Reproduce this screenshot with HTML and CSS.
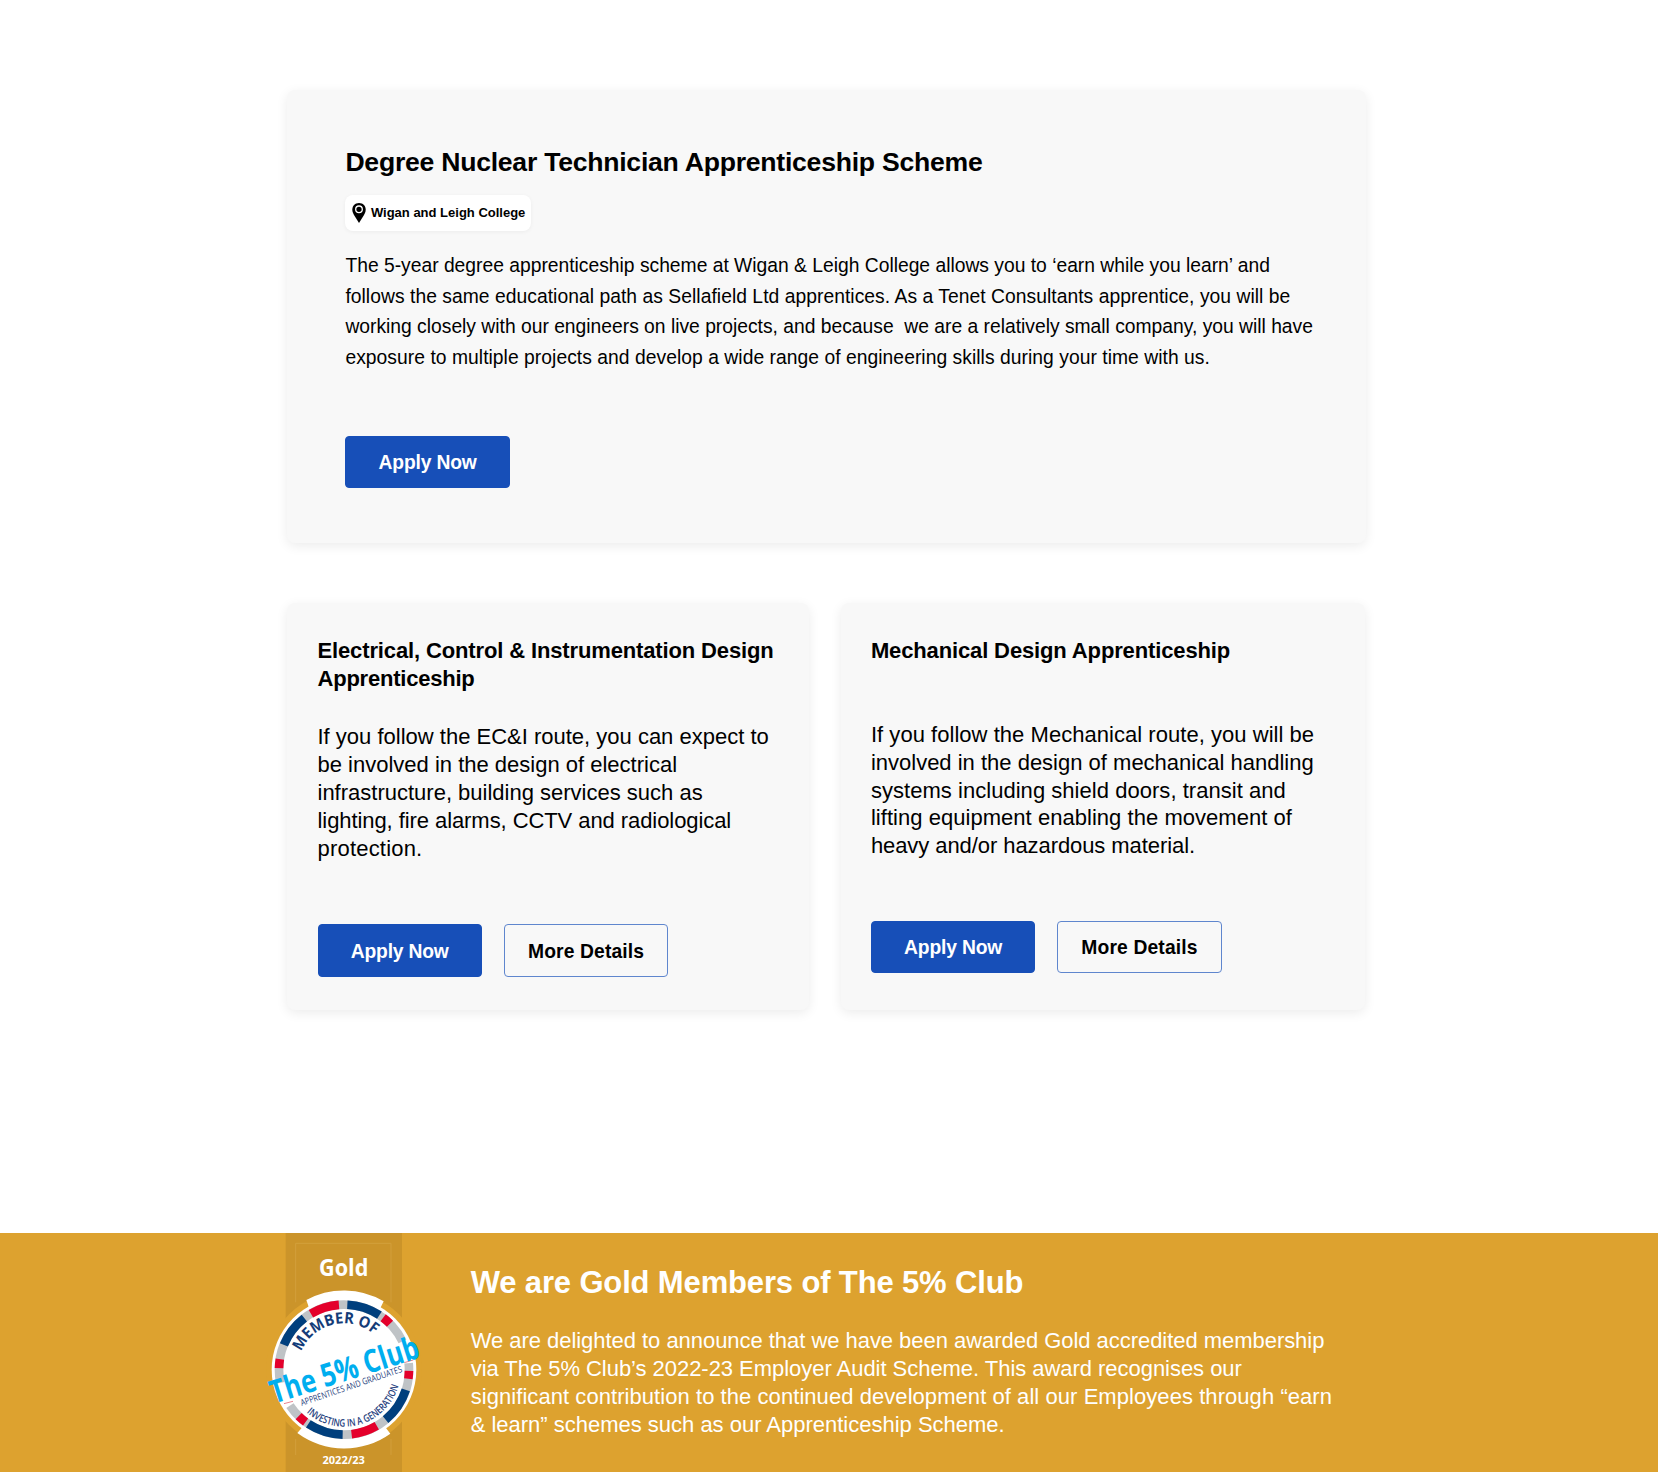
FILE: index.html
```html
<!DOCTYPE html>
<html lang="en">
<head>
<meta charset="utf-8">
<title>Apprenticeships</title>
<link rel="stylesheet" href="styles.css">
</head>
<body>
<main class="schemes">
  <section class="card card-wide">
    <h2 class="title-lg">Degree Nuclear Technician Apprenticeship Scheme</h2>
    <div class="place">
      <svg class="pin" viewBox="0 0 14 20" width="14" height="20"><path d="M7 0C3 0 .3 2.900.3 6.500c0 2.300.9 4 2 6L7 20l4.700-7.500c1.200-2 2-3.700 2-6C13.700 2.900 11 0 7 0z"/><circle cx="7" cy="6.300" r="3.300" fill="none" stroke="#fff" stroke-width="1.300"/></svg>
      <span>Wigan and Leigh College</span>
    </div>
    <p class="text-wide">
      <span class="line snug">The 5-year degree apprenticeship scheme at Wigan &amp; Leigh College allows you to ‘earn while you learn’ and</span>
      <span class="line loose">follows the same educational path as Sellafield Ltd apprentices. As a Tenet Consultants apprentice, you will be</span>
      <span class="line snug">working closely with our engineers on live projects, and because&nbsp; we are a relatively small company, you will have</span>
      <span class="line loose">exposure to multiple projects and develop a wide range of engineering skills during your time with us.</span>
    </p>
    <div class="actions"><a class="btn btn-primary">Apply Now</a></div>
  </section>
  <div class="pair">
    <section class="card card-half">
      <h3 class="title-md"><span class="line">Electrical, Control &amp; Instrumentation Design</span><span class="line snug">Apprenticeship</span></h3>
      <p class="text">
        <span class="line">If you follow the EC&amp;I route, you can expect to</span>
        <span class="line">be involved in the design of electrical</span>
        <span class="line">infrastructure, building services such as</span>
        <span class="line tighter">lighting, fire alarms, CCTV and radiological</span>
        <span class="line loosest">protection.</span>
      </p>
      <div class="actions"><a class="btn btn-primary">Apply Now</a><a class="btn btn-outline">More Details</a></div>
    </section>
    <section class="card card-half card-mech">
      <h3 class="title-md"><span class="line">Mechanical Design Apprenticeship</span></h3>
      <p class="text">
        <span class="line loose">If you follow the Mechanical route, you will be</span>
        <span class="line">involved in the design of mechanical handling</span>
        <span class="line loose">systems including shield doors, transit and</span>
        <span class="line loose">lifting equipment enabling the movement of</span>
        <span class="line tighter">heavy and/or hazardous material.</span>
      </p>
      <div class="actions"><a class="btn btn-primary">Apply Now</a><a class="btn btn-outline">More Details</a></div>
    </section>
  </div>
</main>
<section class="band">
  <svg class="club" viewBox="0 22 510 718" width="170" height="239.300">
    <defs>
      <path id="arc-top" d="M113 432A139 139 0 0 1 391 432"/>
      <path id="arc-bottom" d="M81 432A171 171 0 0 0 423 432"/>
    </defs>
    <rect x="77" y="22" width="349" height="718" fill="#cb942a"/>
    <g fill="none" stroke="#d3a03c" stroke-width="3"><path d="M107 230V53H393V230"/><path d="M107 640V688M393 640V688"/></g>
    <circle cx="252" cy="432" r="234" fill="#dda22f"/>
    <path d="M139 223A237 237 0 0 1 371 227L350 270H155ZM112 622A237 237 0 0 0 391 624L365 590H140Z" fill="#fff"/>
    <circle cx="252" cy="432" r="217" fill="#fff"/>
    <g class="ring" transform="rotate(-90 252 432)">
      <circle class="ring-grey" cx="252" cy="432" r="195" pathLength="360"/>
      <circle class="ring-navy" cx="252" cy="432" r="195" pathLength="360"/>
      <circle class="ring-red" cx="252" cy="432" r="195" pathLength="360"/>
    </g>
    <path d="M433 411L460 403M72 534L99 527" stroke="#e56a78" stroke-width="2.500"/>
    <text class="gold" x="251" y="152" textLength="148" lengthAdjust="spacingAndGlyphs">Gold</text>
    <text class="member"><textPath href="#arc-top" startOffset="55" textLength="262" lengthAdjust="spacingAndGlyphs">MEMBER OF</textPath></text>
    <text class="investing"><textPath href="#arc-bottom" startOffset="146" textLength="342" lengthAdjust="spacingAndGlyphs">INVESTING IN A GENERATION</textPath></text>
    <text class="club-name" transform="translate(42 534) rotate(-17.500)" textLength="464" lengthAdjust="spacingAndGlyphs">The 5% Club</text>
    <text class="grads" transform="translate(125 541) rotate(-18.700)" textLength="320" lengthAdjust="spacingAndGlyphs">APPRENTICES AND GRADUATES</text>
    <text class="years" x="251" y="715" textLength="127" lengthAdjust="spacingAndGlyphs">2022/23</text>
  </svg>
  <div class="band-copy">
    <h2 class="band-title">We are Gold Members of The 5% Club</h2>
    <p class="text">
      <span class="line tight">We are delighted to announce that we have been awarded Gold accredited membership</span>
      <span class="line tight">via The 5% Club’s 2022-23 Employer Audit Scheme. This award recognises our</span>
      <span class="line looser">significant contribution to the continued development of all our Employees through “earn</span>
      <span class="line snug">&amp; learn” schemes such as our Apprenticeship Scheme.</span>
    </p>
  </div>
</section>
</body>
</html>
```
FILE: styles.css
```css
* { box-sizing: border-box; }
body { margin: 0; background: #fff; color: #000; font-family: "Liberation Sans", Arial, sans-serif; }
h2, h3, p { margin: 0; }
.line { display: block; white-space: nowrap; }
.loose { letter-spacing: .038px; }
.looser { letter-spacing: .06px; }
.loosest { letter-spacing: .2px; }
.snug { letter-spacing: -.008px; }
.tight { letter-spacing: -.04px; }
.tighter { letter-spacing: -.075px; }
.schemes { width: 1079px; margin-left: 286.500px; padding-top: 90px; }
.card { background: #f8f8f8; border-radius: 8px; box-shadow: 0 3px 12px rgba(0, 0, 0, .08); }
.card-wide { height: 453.400px; padding: 54.500px 50px 0 58.900px; }
.title-lg { font-size: 26.600px; line-height: 34px; letter-spacing: -.25px; white-space: nowrap; }
.place { display: flex; align-items: center; width: 185.300px; height: 36.500px; margin-top: 16px; padding-left: 7px; gap: 4.500px; border-radius: 8px; background: #fff; box-shadow: 0 1px 4px rgba(0, 0, 0, .05); font-size: 13px; font-weight: 700; white-space: nowrap; }
.pin { flex: none; }
.text-wide { margin-top: 20px; font-size: 19.300px; line-height: 30.500px; }
.actions { display: flex; gap: 22px; }
.card-wide .actions { margin-top: 63.200px; }
.btn { display: flex; align-items: center; justify-content: center; width: 164.400px; height: 52.200px; padding-top: 2px; border: 1px solid #174fb8; border-radius: 4px; font-size: 19.300px; font-weight: 700; white-space: nowrap; }
.btn-primary { background: #174fb8; color: #fff; letter-spacing: -.18px; }
.btn-outline { border-color: #5f86ce; letter-spacing: .13px; }
.pair { display: grid; grid-template-columns: 522.500px 524.300px; gap: 32px; margin-top: 59.500px; }
.card-half { height: 407.400px; padding: 34px 20px 0 31px; }
.card-mech { padding-left: 29.900px; }
.title-md { height: 57px; font-size: 22px; line-height: 28px; letter-spacing: -.135px; }
.title-md .snug { letter-spacing: -.224px; }
.text { font-size: 22px; line-height: 27.900px; }
.card-half .text { margin-top: 29px; }
.card-half .actions { margin-top: 62px; }
.card-mech .text { margin-top: 26.800px; }
.card-mech .actions { margin-top: 60.500px; }
.band { display: flex; height: 239px; margin-top: 222.500px; background: #dda22f; color: #fff; padding-left: 260px; }
.band-copy { margin-left: 40.700px; padding-top: 30px; }
.band-title { font-size: 31px; line-height: 40px; letter-spacing: -.145px; white-space: nowrap; }
.band .text { margin-top: 24px; line-height: 28.100px; }

.club { flex: none; overflow: visible; }
.club text { font-family: "Open Sans", "Noto Sans", sans-serif; }
.ring circle { fill: none; stroke-width: 26; }
.ring .ring-grey { stroke: #bfc3c6; stroke-dasharray: 64 20 152 22 102 0; }
.ring .ring-navy { stroke: #003f7d; stroke-dasharray: 0 3 30 75 32 41 32 79 30 38; }
.ring .ring-red { stroke: #e4002b; stroke-dasharray: 0 37 8 46 7 51.500 23.500 43 8 47 8 50 26 5; }
.club .gold { font-size: 68px; font-weight: 700; fill: #fff; text-anchor: middle; }
.club .years { font-size: 32px; font-weight: 700; fill: #fff; text-anchor: middle; }
.club .member { font-size: 47px; font-weight: 700; fill: #143c78; }
.club .investing { font-size: 31px; font-weight: 600; fill: #27427e; }
.club .club-name { font-size: 96px; font-weight: 700; fill: #00aeef; }
.club .grads { font-size: 27px; fill: #27427e; }
```
